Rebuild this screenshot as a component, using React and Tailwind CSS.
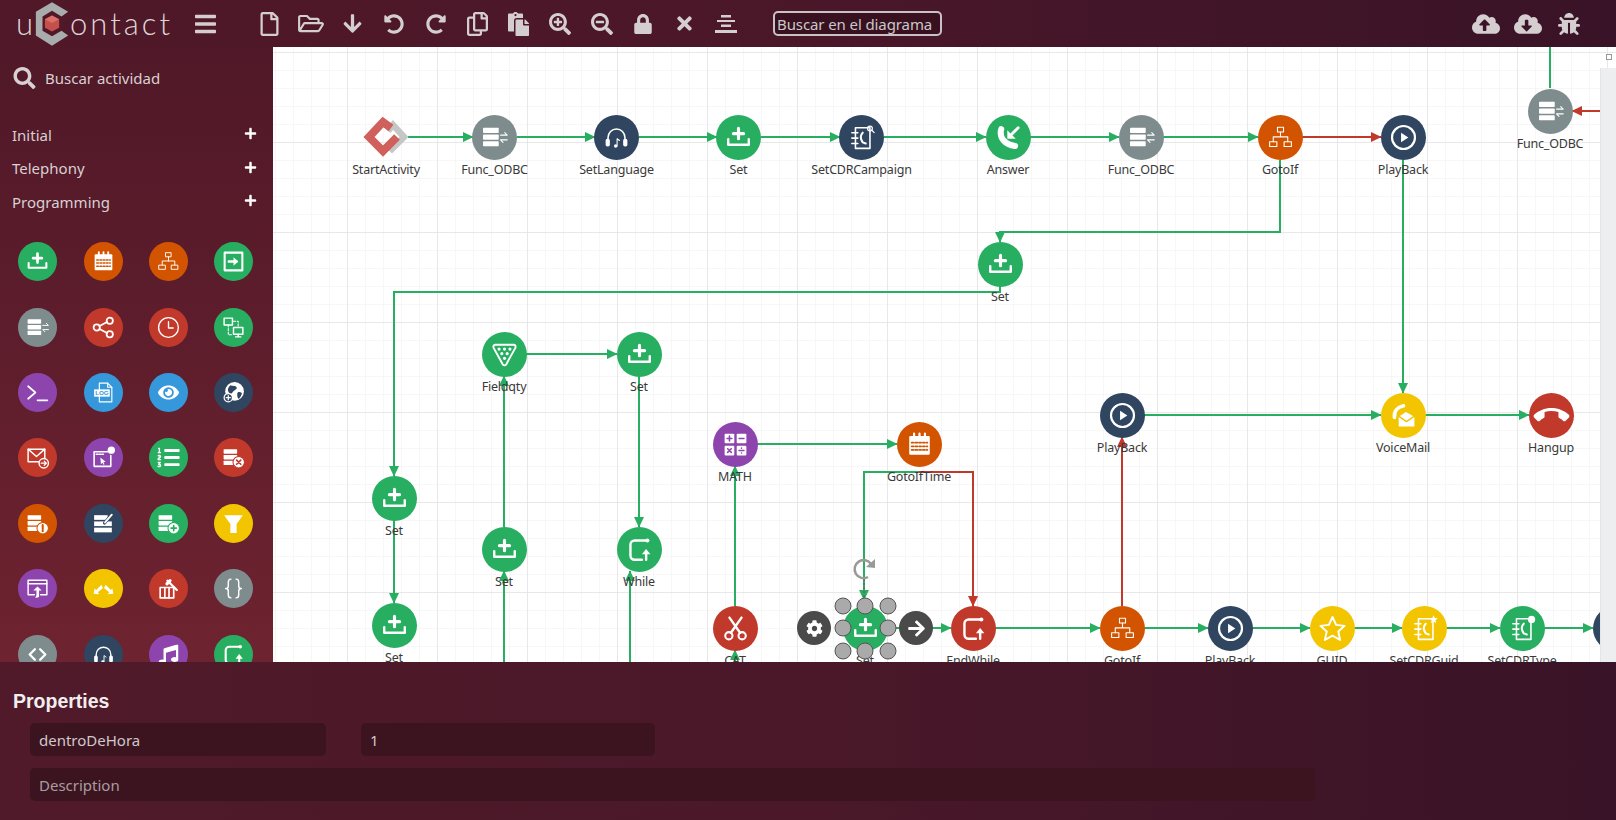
import React from "react";
import {
  FaBars, FaRegFile, FaRegFolderOpen, FaArrowDown, FaUndoAlt, FaRedoAlt, FaRegCopy, FaPaste,
  FaSearchPlus, FaSearchMinus, FaLock, FaTimes, FaCloudUploadAlt, FaCloudDownloadAlt, FaBug,
  FaSearch, FaPlus, FaEye, FaListOl, FaMusic, FaCog, FaArrowRight,
} from "react-icons/fa";
import { MdCallEnd } from "react-icons/md";

const COLORS = {
  green: "bg-[#27ae60] text-[#27ae60]",
  orange: "bg-[#d35400] text-[#d35400]",
  red: "bg-[#c0392b] text-[#c0392b]",
  purple: "bg-[#8e44ad] text-[#8e44ad]",
  navy: "bg-[#2f4560] text-[#2f4560]",
  gray: "bg-[#7f8c8d] text-[#7f8c8d]",
  blue: "bg-[#3498db] text-[#3498db]",
  yellow: "bg-[#f2c500] text-[#f2c500]",
  none: "",
};

const rows = (
  <g fill="white" stroke="none">
    <rect x="2.500" y="4" width="13" height="4.300" rx="0.600" />
    <rect x="2.500" y="9.500" width="13" height="4.300" rx="0.600" />
    <rect x="2.500" y="15" width="13" height="4.300" rx="0.600" />
  </g>
);

const badge = (inner) => (
  <g>
    <circle cx="17" cy="16.500" r="5.500" fill="white" stroke="currentColor" strokeWidth="1" />
    <g stroke="currentColor" strokeWidth="1.600">{inner}</g>
  </g>
);

const bookBase = (
  <g>
    <rect x="7" y="4" width="12" height="17" strokeWidth="1.300" />
    <path d="M4 8h5M4 12.500h5M4 17h5" strokeWidth="1.300" />
    <path d="M13 8c-2 2-2 5 0 8l2.500 1" strokeWidth="1.700" />
  </g>
);

// svg glyphs, drawn on a 24x24 box. white stroke unless said otherwise
const GLYPHS = {
  set: (<g><path d="M12 4.500v8.500M7.800 8.800h8.400" strokeWidth="2.600" /><path d="M3.500 13.500v4.500h17v-4.500" strokeWidth="2" /></g>),
  calendar: (
    <g>
      <rect x="3.500" y="5" width="17" height="15.500" rx="1" fill="white" stroke="none" />
      <path d="M7.500 3v3.500M12 3v3.500M16.500 3v3.500" strokeWidth="1.800" />
      <g stroke="currentColor" strokeWidth="1.500" strokeDasharray="1.600 1.500">
        <path d="M5.500 10.500h13M5.500 13.500h13M5.500 16.500h13" />
      </g>
    </g>
  ),
  gotoif: (<g strokeWidth="0.900"><rect x="9.500" y="3.500" width="5" height="4" /><rect x="3" y="15.500" width="6" height="4" /><rect x="15" y="15.500" width="6" height="4" /><path d="M12 7.500v4M6 15.500v-4h12v4" /></g>),
  play: (<g><circle cx="12" cy="12" r="9.500" strokeWidth="1.800" /><path d="M10 8l6 4-6 4z" fill="white" stroke="none" /></g>),
  exit: (<g strokeWidth="2"><rect x="3.500" y="3.500" width="17" height="17" /><path d="M7.500 12h7.500" strokeWidth="2.400" /><path d="M12 8l4.500 4-4.500 4z" fill="white" stroke="none" /></g>),
  db: (<g>{rows}<path d="M17 10h5.500l-2-2M22.500 14H17l2 2" strokeWidth="0.900" /></g>),
  share: (<g strokeWidth="1.700"><circle cx="18" cy="5.500" r="3" /><circle cx="5.500" cy="12" r="3" /><circle cx="18" cy="18.500" r="3" /><path d="M8.200 10.600l7.200-3.800M8.200 13.400l7.200 3.800" /></g>),
  clock: (<g strokeWidth="1.300"><circle cx="12" cy="12" r="9.500" /><path d="M12 6.500V12.500h4.500" /></g>),
  network: (<g strokeWidth="1.400"><rect x="3" y="3" width="8" height="6.500" /><rect x="12" y="12" width="9" height="6.500" /><path d="M16.500 18.500v2.500M14 21h5" /><path d="M7 9.500v9.500h4M12 6h4.500v5" strokeDasharray="2 1.500" strokeWidth="1" /></g>),
  terminal: (<g strokeWidth="1.600"><path d="M3 6l7 6-7 6" /><path d="M12 19.500h9.500" /></g>),
  log: (
    <g strokeWidth="1.100">
      <path d="M8 3h8l4 4v14H8z" />
      <path d="M16 3v4h4" />
      <rect x="3" y="9" width="15" height="7" fill="white" stroke="none" />
      <text x="10.500" y="14.800" textAnchor="middle" fontSize="6" fontFamily="Liberation Sans, sans-serif" fontWeight="700" fill="currentColor" stroke="none">LOG</text>
    </g>
  ),
  globe: (
    <g>
      <circle cx="13" cy="11" r="9" fill="white" stroke="none" />
      <path d="M9 5c2 1 5 0 6 2s-3 3-4 5-3 1-4-1 0-4 2-6zM16 12c2-1 4 0 4 1s-2 5-3 5-2-4-1-6z" fill="currentColor" stroke="none" />
      <circle cx="7" cy="17" r="4" fill="currentColor" stroke="white" strokeWidth="1.200" />
      <path d="M7 15v4M5 17h4" strokeWidth="1.200" />
    </g>
  ),
  mail: (<g strokeWidth="1.400"><path d="M3 4h16v12H3z" /><path d="M3 4l8 7 8-7" /><circle cx="18" cy="17.500" r="4.500" fill="currentColor" /><path d="M15.500 17.500h4.500M18.500 15.500l2 2-2 2" strokeWidth="1.200" /></g>),
  browserq: (<g strokeWidth="1.500"><path d="M3 6.500h13M3 6.500v14h16V10" /><path d="M5 8.800h8" strokeWidth="1.500" strokeDasharray="1.500 1.200" /><circle cx="19.500" cy="5" r="3.500" fill="white" stroke="none" /><path d="M9 12l5 4-2 .5 1 2-1 .5-1-2-1.500 1.500z" fill="white" stroke="none" /></g>),
  dbx: (<g>{rows}{badge(<path d="M15 14.500l4 4M19 14.500l-4 4" />)}</g>),
  dbwarn: (<g>{rows}{badge(<path d="M17 13.500v3.500M17 18.200v1.300" strokeWidth="2" />)}</g>),
  dbplus: (<g>{rows}{badge(<path d="M17 14v5M14.500 16.500h5" />)}</g>),
  dbedit: (<g><rect x="3" y="4" width="13" height="4.500" fill="white" stroke="none" /><rect x="3" y="10" width="17" height="4.500" fill="white" stroke="none" /><rect x="3" y="16" width="17" height="4.500" fill="white" stroke="none" /><path d="M13 11.500l7-8" strokeWidth="3" stroke="currentColor" /><path d="M13.500 11l6.500-7.500" strokeWidth="1.800" /></g>),
  filter: (<path d="M3 4h18l-6 8.500V21H9v-8.500z" fill="white" stroke="none" />),
  browserup: (<g strokeWidth="1.400"><path d="M9 18H3V4h18v14h-6" /><path d="M3 7.500h18" /><path d="M12 10l4 4h-2.500v6c-1 1-3 1-4 .5 1-.5 1.500-1.500 1.500-2.500v-4H8z" fill="white" stroke="none" /></g>),
  chevrons: (<g fill="white" stroke="none"><path d="M10 8.500L11.500 11.500L6.500 15.500L8 17.500L2.500 17L3.500 12L5 13.500z" /><path d="M14 8.500L12.500 11.500L17.500 15.500L16 17.500L21.500 17L20.500 12L19 13.500z" /></g>),
  hammerbox: (<g><rect x="4" y="11" width="13" height="10" strokeWidth="1.600" /><path d="M8.500 11v10M12.500 11v10" strokeWidth="1.600" /><path d="M11 4.500l9 9" strokeWidth="2.200" /><path d="M10.500 7.500l3-3" strokeWidth="3" /></g>),
  braces: (<g strokeWidth="1.400"><path d="M9.500 3c-2.500 0-2.500 1.500-2.500 3v3.500c0 1.500-1 2.500-2.500 2.500 1.500 0 2.500 1 2.500 2.500V18c0 1.500 0 3 2.500 3" /><path d="M14.500 3c2.500 0 2.500 1.500 2.500 3v3.500c0 1.500 1 2.500 2.500 2.500-1.500 0-2.500 1-2.500 2.500V18c0 1.500 0 3-2.500 3" /></g>),
  code: (<g strokeWidth="2.200"><path d="M9.500 7l-5 5 5 5" /><path d="M14.500 7l5 5-5 5" /></g>),
  headset: (
    <g>
      <path d="M5 15v-3a7 7 0 0 1 14 0v3" strokeWidth="1.300" />
      <rect x="3" y="13" width="3.500" height="6.500" rx="1.500" fill="white" stroke="none" />
      <rect x="17.500" y="13" width="3.500" height="6.500" rx="1.500" fill="white" stroke="none" />
      <path d="M12.500 19v-6l2 1.500" strokeWidth="0.900" />
      <circle cx="11.300" cy="19" r="1.400" fill="white" stroke="none" />
    </g>
  ),
  loop: (<g strokeWidth="2"><path d="M18 4.500H8a3.500 3.500 0 0 0-3.500 3.500v9A3.500 3.500 0 0 0 8 20.500h6" /><circle cx="18.500" cy="4.500" r="1.700" fill="white" stroke="none" /><path d="M17.500 20.500v-5" /><path d="M14 16l3.500-4.500 3.500 4.500z" fill="white" stroke="none" /></g>),
  fieldqty: (
    <g>
      <path d="M4.500 4h15c1.500 0 2 1 1.500 2.500L13.500 20c-.8 1.300-2.200 1.300-3 0L3 6.500C2.500 5 3 4 4.500 4z" strokeWidth="1.600" />
      <g fill="white" stroke="none">
        <circle cx="7.500" cy="7.500" r="1.300" /><circle cx="12" cy="7.500" r="1.300" /><circle cx="16.500" cy="7.500" r="1.300" />
        <circle cx="9.800" cy="11.300" r="1.300" /><circle cx="14.200" cy="11.300" r="1.300" /><circle cx="12" cy="15.200" r="1.300" />
      </g>
    </g>
  ),
  math: (
    <g>
      <g fill="white" stroke="none">
        <rect x="3" y="3" width="8" height="8" rx="0.800" /><rect x="13" y="3" width="8" height="8" rx="0.800" />
        <rect x="3" y="13" width="8" height="8" rx="0.800" /><rect x="13" y="13" width="8" height="8" rx="0.800" />
      </g>
      <path d="M7 5v4M5 7h4M15 7h4M5.500 15.500l3 3M8.500 15.500l-3 3M15 17h4M17 15v.1M17 19v.1" stroke="currentColor" strokeWidth="1.300" />
    </g>
  ),
  star: (<path d="M12 2.500l3 6.500 7 .8-5.200 4.700 1.500 7L12 17.900l-6.300 3.600 1.500-7L2 9.800 9 9z" strokeWidth="1.600" />),
  voicemail: (
    <g>
      <path d="M4.500 13.500C4 8.500 7 5 12 4" strokeWidth="3" />
      <path d="M8 13l6-4 7 4v8H8z" fill="white" stroke="none" />
      <path d="M8 12.500l6.500 4.500 6.500-4.500" stroke="currentColor" strokeWidth="1.200" />
    </g>
  ),
  answer: (
    <g>
      <path d="M6 5c-2 7 3 13 11.500 14" strokeWidth="5" />
      <path d="M20 4l-7 7" strokeWidth="2.400" />
      <path d="M11 6v7h7z" fill="white" stroke="none" />
    </g>
  ),
  cut: (
    <g strokeWidth="1.700">
      <circle cx="6.500" cy="18" r="3" />
      <circle cx="17.500" cy="18" r="3" />
      <path d="M8.200 15.500L17 3M15.800 15.500L7 3" strokeWidth="2" />
    </g>
  ),
  bookCampaign: (<g>{bookBase}<circle cx="19" cy="4.500" r="2" strokeWidth="1" /><path d="M20.500 6l2 2" strokeWidth="1" /></g>),
  bookGuid: (<g>{bookBase}<path d="M19.500 1l1 2.300 2.500.2-1.900 1.700.6 2.400-2.200-1.300-2.200 1.300.6-2.400L16 3.500l2.500-.2z" fill="white" stroke="none" /></g>),
  bookType: (<g>{bookBase}<circle cx="19.500" cy="4.500" r="3" fill="white" stroke="none" /></g>),
};

const ICON_COMPONENTS = {
  eye: [FaEye, "scale-[0.85]"],
  list: [FaListOl, "scale-90"],
  music: [FaMusic, "scale-[0.8]"],
  hangup: [MdCallEnd, "scale-125"],
};

const Glyph = ({ name, small }) => {
  const size = small ? "w-[25px] h-[25px]" : "w-[29px] h-[29px]";
  if (!name) return null;
  const rc = ICON_COMPONENTS[name];
  if (rc) {
    const Comp = rc[0];
    return <Comp className={`${size} ${rc[1]} text-white`} />;
  }
  return (
    <svg viewBox="0 0 24 24" className={size} fill="none" stroke="white" strokeLinecap="round" strokeLinejoin="round">
      {GLYPHS[name]}
    </svg>
  );
};

const PALETTE = [
  ["set", "green"], ["calendar", "orange"], ["gotoif", "orange"], ["exit", "green"],
  ["db", "gray"], ["share", "red"], ["clock", "red"], ["network", "green"],
  ["terminal", "purple"], ["log", "blue"], ["eye", "blue"], ["globe", "navy"],
  ["mail", "red"], ["browserq", "purple"], ["list", "green"], ["dbx", "red"],
  ["dbwarn", "orange"], ["dbedit", "navy"], ["dbplus", "green"], ["filter", "yellow"],
  ["browserup", "purple"], ["chevrons", "yellow"], ["hammerbox", "red"], ["braces", "gray"],
  ["code", "gray"], ["headset", "navy"], ["music", "purple"], ["loop", "green"],
];

// page coordinates of each node centre
const NODES = [
  { x: 386, y: 137, icon: null, color: "none", label: "StartActivity" },
  { x: 494.500, y: 137, icon: "db", color: "gray", label: "Func_ODBC" },
  { x: 616.500, y: 137, icon: "headset", color: "navy", label: "SetLanguage" },
  { x: 738.500, y: 137, icon: "set", color: "green", label: "Set" },
  { x: 861.500, y: 137, icon: "bookCampaign", color: "navy", label: "SetCDRCampaign" },
  { x: 1008, y: 137, icon: "answer", color: "green", label: "Answer" },
  { x: 1141, y: 137, icon: "db", color: "gray", label: "Func_ODBC" },
  { x: 1280, y: 137, icon: "gotoif", color: "orange", label: "GotoIf" },
  { x: 1403, y: 137, icon: "play", color: "navy", label: "PlayBack" },
  { x: 1550, y: 111, icon: "db", color: "gray", label: "Func_ODBC" },
  { x: 1000, y: 264, icon: "set", color: "green", label: "Set" },
  { x: 504, y: 354, icon: "fieldqty", color: "green", label: "Fieldqty" },
  { x: 639, y: 354, icon: "set", color: "green", label: "Set" },
  { x: 735, y: 444, icon: "math", color: "purple", label: "MATH" },
  { x: 919, y: 444, icon: "calendar", color: "orange", label: "GotoIfTime" },
  { x: 394, y: 498, icon: "set", color: "green", label: "Set" },
  { x: 504, y: 549, icon: "set", color: "green", label: "Set" },
  { x: 639, y: 549, icon: "loop", color: "green", label: "While" },
  { x: 394, y: 625, icon: "set", color: "green", label: "Set" },
  { x: 735, y: 628, icon: "cut", color: "red", label: "CAT" },
  { x: 865, y: 628, icon: "set", color: "green", label: "Set" },
  { x: 973, y: 628, icon: "loop", color: "red", label: "EndWhile" },
  { x: 1122, y: 628, icon: "gotoif", color: "orange", label: "GotoIf" },
  { x: 1230, y: 628, icon: "play", color: "navy", label: "PlayBack" },
  { x: 1332, y: 628, icon: "star", color: "yellow", label: "GUID" },
  { x: 1424, y: 628, icon: "bookGuid", color: "yellow", label: "SetCDRGuid" },
  { x: 1522, y: 628, icon: "bookType", color: "green", label: "SetCDRType" },
  { x: 1615, y: 628, icon: "play", color: "navy", label: "SetRc" },
  { x: 1122, y: 415, icon: "play", color: "navy", label: "PlayBack" },
  { x: 1403, y: 415, icon: "voicemail", color: "yellow", label: "VoiceMail" },
  { x: 1551, y: 415, icon: "hangup", color: "red", label: "Hangup" },
];

const GREEN_LINES = [
  "M408 137H473", "M517 137H595", "M639 137H717", "M761 137H840", "M884 137H986", "M1030 137H1119", "M1163 137H1258",
  "M1280 160V232H1000V242", "M1403 160V393", "M1000 286V292H394V476", "M394 520V603", "M526 354H617",
  "M504 527V376", "M639 376V527", "M504 662V571", "M630 662V571", "M757 444H897", "M735 606V466", "M735 662V650",
  "M919 472H864V600", "M890 628H951", "M995 628H1100", "M1144 415H1381", "M1425 415H1529",
  "M1144 628H1208", "M1252 628H1310", "M1354 628H1402", "M1446 628H1500", "M1544 628H1593",
];
const GREEN_PLAIN = ["M1550 47V88"];
const RED_LINES = ["M1302 137H1381", "M919 472H973V606", "M1122 606V437", "M1600 111H1572"];

const HANDLES = [
  [843, 606], [865, 606], [888, 606], [843, 628], [888, 628], [843, 651], [865, 651], [888, 651],
];

const Node = ({ node }) => (
  <div
    className={`absolute w-[45px] h-[45px] rounded-full flex items-center justify-center ${COLORS[node.color]}`}
    style={{ left: node.x - 273 - 22.5, top: node.y - 47 - 22.5 }}
  >
    <Glyph name={node.icon} />
    <span className="absolute top-[47px] left-1/2 -translate-x-1/2 whitespace-nowrap text-[12.5px] tracking-[-0.2px] leading-[16px] text-[#3a3a3a]">
      {node.label}
    </span>
  </div>
);

const Diagram = () => (
  <div className="relative flex-1 overflow-hidden bg-white">
    <svg className="absolute inset-0 w-[1343px] h-[615px]" viewBox="273 47 1343 615">
      <defs>
        <pattern id="minor" x="77" y="52" width="18" height="18" patternUnits="userSpaceOnUse">
          <path d="M18 0H0V18" fill="none" stroke="#f0f0f0" strokeWidth="1" />
        </pattern>
        <pattern id="major" x="77" y="52" width="90" height="90" patternUnits="userSpaceOnUse">
          <path d="M90 0H0V90" fill="none" stroke="#e4e4e6" strokeWidth="1.500" />
        </pattern>
        <marker id="arrowGreen" markerUnits="userSpaceOnUse" markerWidth="11" markerHeight="11" refX="10" refY="5.500" orient="auto">
          <path d="M0 0.500L10.500 5.500L0 10.500z" fill="#27ae60" />
        </marker>
        <marker id="arrowRed" markerUnits="userSpaceOnUse" markerWidth="11" markerHeight="11" refX="10" refY="5.500" orient="auto">
          <path d="M0 0.500L10.500 5.500L0 10.500z" fill="#c0392b" />
        </marker>
      </defs>
      <rect x="273" y="47" width="1343" height="615" fill="url(#minor)" />
      <rect x="273" y="47" width="1343" height="615" fill="url(#major)" />
      {GREEN_LINES.map((d) => (
        <path key={d} d={d} fill="none" stroke="#27ae60" strokeWidth="2" markerEnd="url(#arrowGreen)" />
      ))}
      {GREEN_PLAIN.map((d) => (
        <path key={d} d={d} fill="none" stroke="#27ae60" strokeWidth="2" />
      ))}
      {RED_LINES.map((d) => (
        <path key={d} d={d} fill="none" stroke="#c0392b" strokeWidth="2" markerEnd="url(#arrowRed)" />
      ))}
      {/* start activity logo */}
      <g fill="none">
        <path d="M388 131L393 125L404 137L392 149L386 143" stroke="#c5c7c7" strokeWidth="6.500" />
        <path d="M391 128L383 122L369 137L383 151L397 137" stroke="#d0605c" strokeWidth="8" />
      </g>
    </svg>

    {NODES.map((n) => (
      <Node key={`${n.label}-${n.x}-${n.y}`} node={n} />
    ))}

    {/* selection handles round the Set node */}
    <svg className="absolute inset-0 w-[1343px] h-[615px]" viewBox="273 47 1343 615">
      <path d="M864 579V597" stroke="#666" strokeWidth="1.500" strokeDasharray="2 2" />
      <path d="M871 564A9 9 0 1 0 868 577" fill="none" stroke="#999" strokeWidth="2.500" />
      <path d="M866 567l9 1 0-9z" fill="#999" />
      {HANDLES.map(([x, y]) => (
        <circle key={`${x}-${y}`} cx={x} cy={y} r="8" fill="#aaaaaa" stroke="#555" strokeWidth="1" />
      ))}
    </svg>
    <div className="absolute left-[524px] top-[564px] w-[34px] h-[34px] rounded-full bg-[#4a4a4a] flex items-center justify-center">
      <FaCog className="w-[17px] h-[17px] text-white" />
    </div>
    <div className="absolute left-[626px] top-[564px] w-[34px] h-[34px] rounded-full bg-[#4a4a4a] flex items-center justify-center">
      <FaArrowRight className="w-[19px] h-[19px] text-white" />
    </div>

    {/* outline toggle and scrollbar track */}
    <div className="absolute left-[1333px] top-[7px] w-[6px] h-[6px] border border-[#999] bg-white" />
    <div className="absolute right-0 top-[21px] bottom-0 w-[16px] bg-[#eceef0] border-l border-[#e2e4e6]" />
  </div>
);

const AlignIcon = () => (
  <svg viewBox="0 0 24 24" className="w-[24px] h-[24px]" fill="#d5ced0">
    <rect x="7" y="3" width="10" height="2.500" />
    <rect x="3" y="8" width="18" height="2" />
    <rect x="7" y="12.500" width="10" height="2.500" />
    <rect x="1" y="18" width="22" height="3" />
  </svg>
);

const TOOLBAR = [
  <FaRegFile className="w-[21px] h-[24px]" />,
  <FaRegFolderOpen className="w-[26px] h-[23px]" />,
  <FaArrowDown className="w-[21px] h-[21px]" />,
  <FaUndoAlt className="w-[20px] h-[20px]" />,
  <FaRedoAlt className="w-[20px] h-[20px]" />,
  <FaRegCopy className="w-[23px] h-[24px]" />,
  <FaPaste className="w-[23px] h-[24px]" />,
  <FaSearchPlus className="w-[22px] h-[22px]" />,
  <FaSearchMinus className="w-[22px] h-[22px]" />,
  <FaLock className="w-[18px] h-[20px]" />,
  <FaTimes className="w-[19px] h-[21px]" />,
  <AlignIcon />,
];

const Logo = () => (
  <div className="flex items-center w-[194px] pl-[16px] text-[#dcd6d7] font-['Lato',sans-serif] font-light text-[31px] leading-none">
    <span>u</span>
    <svg viewBox="0 0 40 46" className="w-[38px] h-[44px] mt-[1px] shrink-0">
      <path d="M20 0L37 10L30 15L20 9L10 15V30L20 36L30 30L37 35L20 46L3 35V10Z" fill="#a9acac" />
      <path d="M20 14L27.500 18V27L20 31L12.500 27V18Z" fill="#c4504c" />
      <path d="M20 14L27.500 18L20 22L12.500 18Z" fill="#d9706a" />
    </svg>
    <span className="tracking-[3px] -ml-[1px]">ontact</span>
  </div>
);

const Header = () => (
  <header className="h-[47px] shrink-0 flex items-center bg-gradient-to-r from-[#501828] via-[#4a1729] to-[#391327] text-[#d5ced0]">
    <Logo />
    <FaBars className="w-[21px] h-[24px] ml-[1px]" />
    <div className="flex items-center ml-[33px]">
      {TOOLBAR.map((icon, i) => (
        <div key={i} className="w-[41.5px] flex items-center justify-center">
          {icon}
        </div>
      ))}
    </div>
    <input
      readOnly
      placeholder="Buscar en el diagrama"
      className="ml-[26px] w-[169px] h-[25px] px-[2px] border-2 border-[#c9c1c3] rounded-[5px] bg-[#38101f] text-[15px] tracking-[-0.1px] outline-none placeholder:text-[#c8c8c8]"
    />
    <div className="ml-auto flex items-center pr-[26px]">
      <div className="w-[41.5px] flex justify-center"><FaCloudUploadAlt className="w-[28px] h-[24px]" /></div>
      <div className="w-[41.5px] flex justify-center"><FaCloudDownloadAlt className="w-[28px] h-[24px]" /></div>
      <div className="w-[41.5px] flex justify-center"><FaBug className="w-[22px] h-[24px]" /></div>
    </div>
  </header>
);

const Sidebar = () => (
  <aside className="w-[273px] shrink-0 overflow-hidden bg-gradient-to-b from-[#501828] to-[#6e2330] text-[#d8d0d2]">
    <div className="flex items-center h-[24px] mt-[19px] pl-[13px] gap-[9px]">
      <FaSearch className="w-[23px] h-[22px]" />
      <span className="text-[15px]">Buscar actividad</span>
    </div>
    <div className="mt-[28px]">
      {["Initial", "Telephony", "Programming"].map((item) => (
        <div key={item} className="h-[33.5px] flex items-center justify-between pl-[12px] pr-[16px]">
          <span className="text-[15px]">{item}</span>
          <FaPlus className="w-[13px] h-[13px] -mt-[2px] text-white" />
        </div>
      ))}
    </div>
    <div className="grid grid-cols-[repeat(4,65.4px)] auto-rows-[65.4px] place-items-center pl-[5px] mt-[10.5px]">
      {PALETTE.map(([icon, color]) => (
        <div key={icon} className={`w-[39px] h-[39px] rounded-full flex items-center justify-center ${COLORS[color]}`}>
          <Glyph name={icon} small />
        </div>
      ))}
    </div>
  </aside>
);

const fieldClass =
  "h-[33px] px-[9px] rounded-[5px] bg-[#3c1420] text-[15px] text-[#d0c8ca] outline-none placeholder:text-[#a89ca0]";

const Properties = () => (
  <section className="flex-1 pl-[13px] pt-[27px] bg-gradient-to-r from-[#501a2a] via-[#4a1829] to-[#391327]">
    <h2 className="h-[24px] leading-[24px] text-[19.5px] font-bold text-[#f2eeee] font-['Liberation_Sans',sans-serif]">Properties</h2>
    <div className="flex gap-[35px] ml-[17px] mt-[10px]">
      <input readOnly value="dentroDeHora" className={`${fieldClass} w-[296px]`} />
      <input readOnly value="1" className={`${fieldClass} w-[294px]`} />
    </div>
    <input readOnly placeholder="Description" className={`${fieldClass} block w-[1285px] ml-[17px] mt-[12px]`} />
  </section>
);

const App = () => (
  <div className="w-[1616px] h-[820px] flex flex-col overflow-hidden font-['Noto_Sans',sans-serif]">
    <Header />
    <div className="flex h-[615px] shrink-0">
      <Sidebar />
      <Diagram />
    </div>
    <Properties />
  </div>
);

export default App;
